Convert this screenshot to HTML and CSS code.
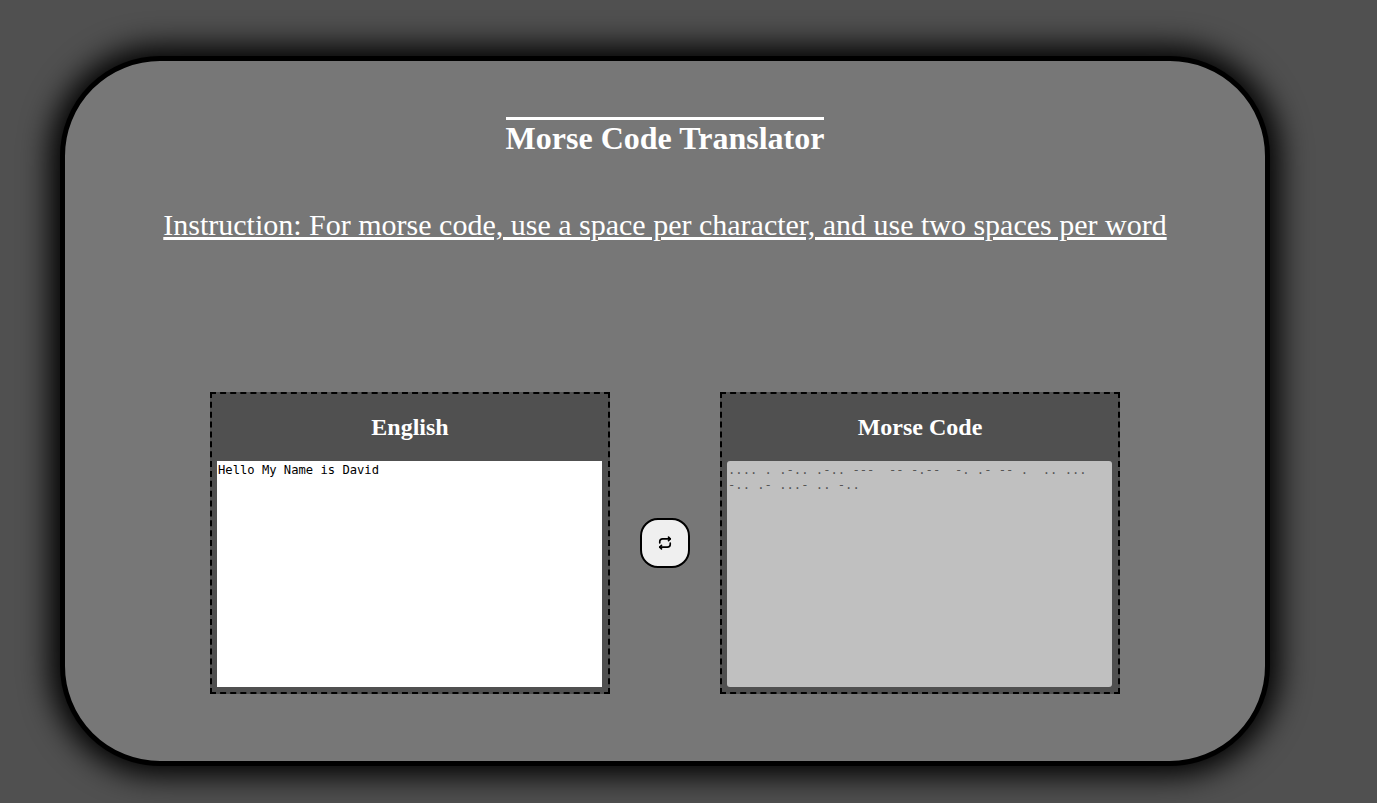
FILE: index.html
```html
<!DOCTYPE html>
<html lang="en">
<head>
  <meta charset="UTF-8">
  <title>Morse Code Translator</title>
  <link rel="stylesheet" href="styles.css">
</head>
<body>
  <div class="container">
    <h1 class="title">Morse Code Translator</h1>
    <p class="instruction">Instruction: For morse code, use a space per character, and use two spaces per word</p>

    <div class="translator">
      <div class="box">
        <h2 class="box-title">English</h2>
        <textarea class="text-in">Hello My Name is David</textarea>
      </div>

      <button class="swap" type="button" aria-label="Swap">
        <svg class="swap-icon" width="14" height="14" viewBox="0 0 24 24" fill="none" stroke="#000" stroke-width="2.8" stroke-linecap="round" stroke-linejoin="round">
          <path d="M18 2l3 3-3 3"/>
          <path d="M3 12v-2a5 5 0 0 1 5-5h13"/>
          <path d="M6 22l-3-3 3-3"/>
          <path d="M21 12v2a5 5 0 0 1-5 5H3"/>
        </svg>
      </button>

      <div class="box">
        <h2 class="box-title">Morse Code</h2>
        <textarea class="text-out" disabled>.... . .-.. .-.. ---  -- -.--  -. .- -- .  .. ...  -.. .- ...- .. -..</textarea>
      </div>
    </div>
  </div>
</body>
</html>
```

FILE: styles.css
```css
* {
  box-sizing: border-box;
}

html, body {
  height: 100%;
}

body {
  margin: 0;
  padding: 56px 107px 0 60px;
  background-color: #505050;
  font-family: "Liberation Serif", "Times New Roman", serif;
  color: white;
  overflow: hidden;
}

.container {
  width: 1210px;
  height: 710px;
  padding: 56px 0 0;
  background-color: #777777;
  border: 5px solid black;
  border-radius: 100px;
  box-shadow: 0 0 30px 10px black;
  display: flex;
  flex-direction: column;
  align-items: center;
}

.title {
  margin: 0;
  border-top: 3px solid white;
  font-size: 32px;
  line-height: 37px;
  font-weight: bold;
}

.instruction {
  margin: 49px 0 0;
  font-size: 30px;
  line-height: 37px;
  text-decoration: underline;
}

.translator {
  margin-top: 149px;
  display: flex;
  align-items: center;
  gap: 30px;
}

.box {
  width: 400px;
  height: 302px;
  padding: 0 6px 5px 5px;
  background-color: #505050;
  border: 2px dashed black;
  display: flex;
  flex-direction: column;
}

.box-title {
  margin: 0;
  height: 67px;
  padding-left: 1px;
  font-size: 24px;
  line-height: 67px;
  text-align: center;
}

.box textarea {
  flex: 1;
  width: 100%;
  margin: 0;
  padding: 2px 2px 2px 1px;
  border: none;
  outline: none;
  resize: none;
  font-family: "DejaVu Sans Mono", monospace;
  font-size: 12.17px;
  line-height: 15px;
}

.text-in {
  background-color: white;
  color: black;
}

.text-out {
  background-color: #c0c0c0;
  color: #555555;
  border-radius: 3px;
}

.swap {
  width: 50px;
  height: 50px;
  padding: 0 0 1px;
  background-color: #efefef;
  border: 2px solid black;
  border-radius: 18px;
  display: flex;
  align-items: center;
  justify-content: center;
}
```
